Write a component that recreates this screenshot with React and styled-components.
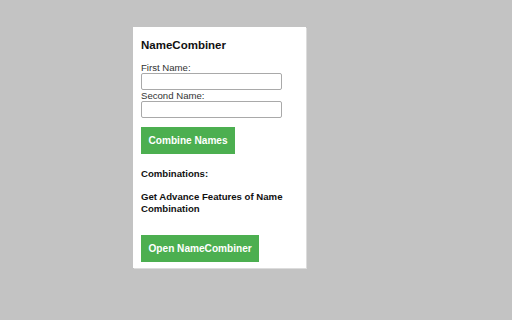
import React from "react";
import styled, { createGlobalStyle } from "styled-components";

const Global = createGlobalStyle`
  html, body { margin: 0; padding: 0; background: #c3c3c3; }
  body { font-family: "Liberation Sans", Arial, sans-serif; }
`;

const Page = styled.div`
  width: 512px;
  height: 320px;
  box-sizing: border-box;
  padding: 27px 0 0 133px;
  background: #c3c3c3;
`;

const Panel = styled.div`
  width: 173px;
  box-sizing: border-box;
  background: #ffffff;
  padding: 11px 8px 6px 8px;
  box-shadow: 1px 1px 0 #dcdcdc;
  display: flex;
  flex-direction: column;
  align-items: flex-start;
`;

const Title = styled.h3`
  margin: 0 0 10px 0;
  font-size: 11.5px;
  line-height: 14px;
  font-weight: bold;
  color: #111;
`;

const Label = styled.label`
  font-size: 9.6px;
  line-height: 11px;
  color: #333;
`;

const Input = styled.input`
  box-sizing: border-box;
  width: 141px;
  height: 17px;
  margin: 0;
  padding: 0 3px;
  border: 1px solid #a9a9a9;
  border-radius: 2px;
  background: #fff;
  font-family: inherit;
  font-size: 10px;
`;

const Button = styled.button`
  box-sizing: border-box;
  height: 27px;
  margin: ${(p) => p.$top}px 0 0 0;
  padding: 0 7.5px;
  border: none;
  border-radius: 0;
  background: #4caf50;
  color: #fff;
  font-family: inherit;
  font-weight: bold;
  font-size: 10.1px;
  cursor: pointer;
`;

const Text = styled.p`
  margin: ${(p) => p.$top}px 0 0 0;
  font-size: 9.6px;
  line-height: 12px;
  font-weight: bold;
  color: #111;
  width: 150px;
`;

export default function App() {
  return (
    <>
      <Global />
      <Page>
        <Panel>
          <Title>NameCombiner</Title>
          <Label>First Name:</Label>
          <Input type="text" />
          <Label>Second Name:</Label>
          <Input type="text" />
          <Button $top={9}>Combine Names</Button>
          <Text $top={14}>Combinations:</Text>
          <Text $top={11}>Get Advance Features of Name Combination</Text>
          <Button $top={20}>Open NameCombiner</Button>
        </Panel>
      </Page>
    </>
  );
}
